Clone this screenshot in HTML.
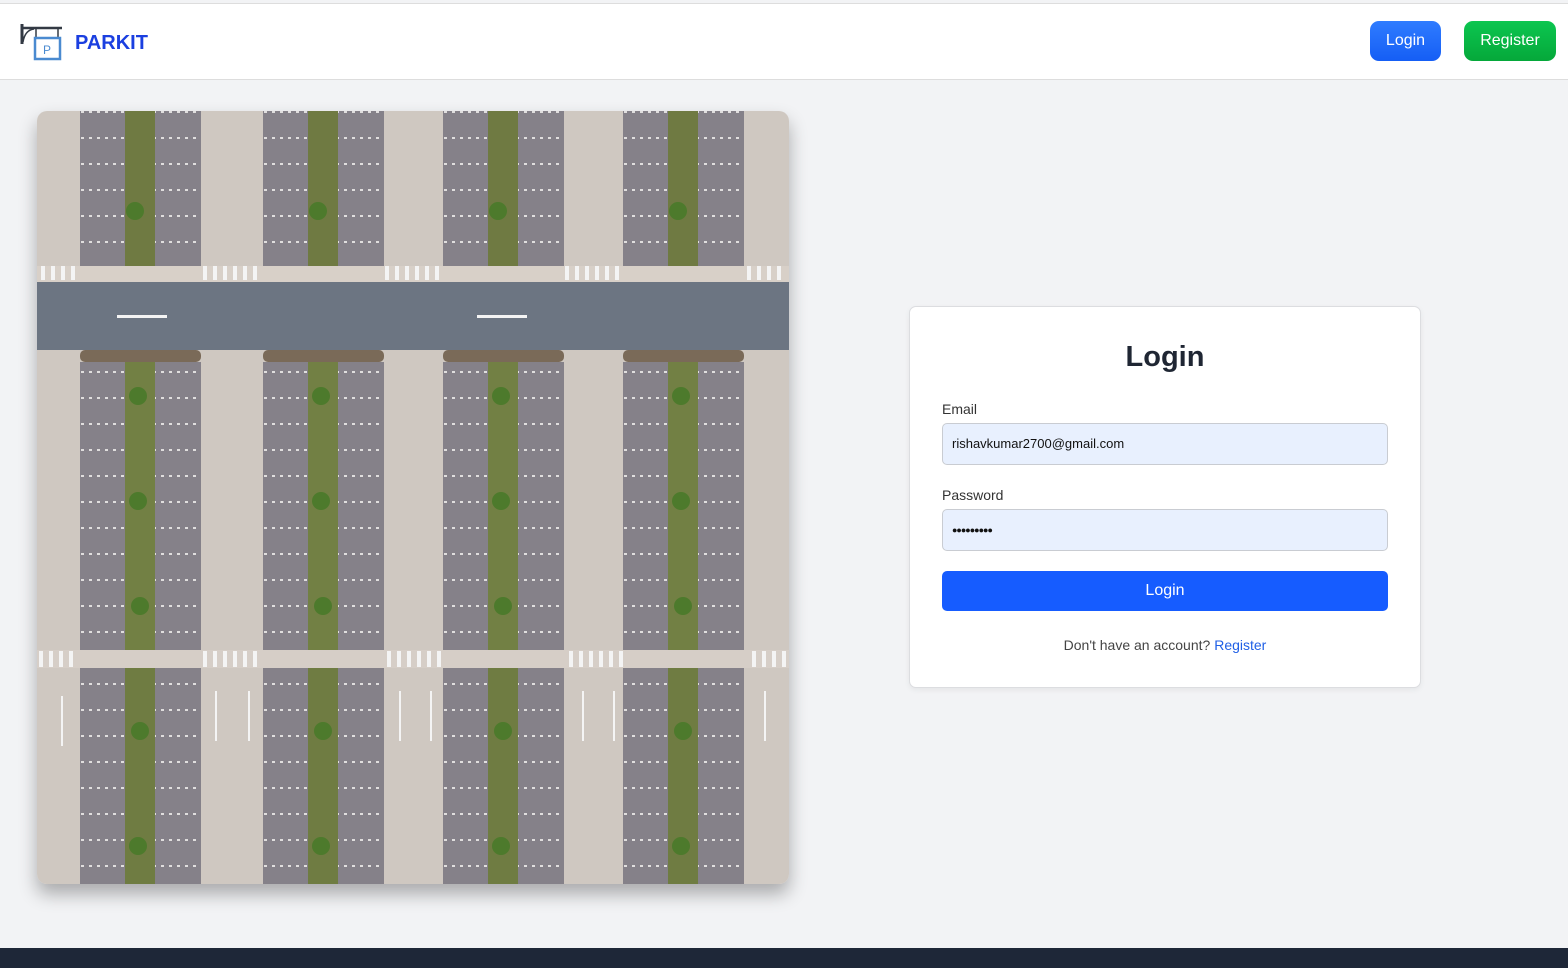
<!DOCTYPE html>
<html><head><style>
*{box-sizing:border-box;margin:0;padding:0}
body{width:1568px;height:968px;background:#f2f3f5;font-family:"Liberation Sans",sans-serif;position:relative;overflow:hidden}
.nav{position:absolute;left:0;top:3px;width:1568px;height:77px;background:#fff;border-top:1px solid #ddd;border-bottom:1px solid #ddd}
.brand{position:absolute;left:75px;top:28px;font-size:20px;font-weight:bold;color:#1b3fe0}
.btn{position:absolute;color:#fff;font-size:16px;border-radius:9px;text-align:center;line-height:40px;height:40px}
.img{position:absolute;left:37px;top:111px;width:752px;height:773px;border-radius:10px;overflow:hidden;box-shadow:0 10px 18px rgba(0,0,0,.3)}
.card{position:absolute;left:909px;top:306px;width:512px;height:382px;background:#fff;border:1px solid #dcdde0;border-radius:7px;box-shadow:0 2px 6px rgba(0,0,0,.06)}
.card h1{position:absolute;top:34px;width:100%;text-align:center;font-size:29px;color:#1f2633}
.lbl{position:absolute;left:32px;font-size:14px;color:#333}
.inp{position:absolute;left:32px;width:446px;height:42px;background:#e8f0fe;border:1px solid #c9ccd2;border-radius:5px;font-size:13px;color:#111;padding-left:9px;line-height:40px}
.sub{position:absolute;left:32px;top:264px;width:446px;height:40px;background:#165cff;border-radius:5px;color:#fff;text-align:center;line-height:40px;font-size:16px}
.foot{position:absolute;left:0;top:948px;width:1568px;height:20px;background:#1e2738}
</style></head><body>
<div class="nav">
<svg style="position:absolute;left:20px;top:18px" width="44" height="40" viewBox="0 0 44 40">
<path d="M2 2V22" stroke="#333a44" stroke-width="3"/><path d="M2 6H42" stroke="#333a44" stroke-width="2.5"/>
<path d="M3 20Q5 8 14 7" stroke="#333a44" stroke-width="1.5" fill="none"/>
<path d="M16 7V16M38 7V16" stroke="#333a44" stroke-width="1.5"/>
<rect x="15" y="16" width="25" height="21" fill="none" stroke="#4a8ad0" stroke-width="2.5"/>
<text x="23" y="32" font-size="12" fill="#4a8ad0" font-family="Liberation Sans">P</text></svg>
<div class="brand">PARKIT</div>
<div class="btn" style="left:1370px;top:17px;width:71px;background:linear-gradient(#2f7cff,#155ef5)">Login</div>
<div class="btn" style="left:1464px;top:17px;width:92px;background:linear-gradient(#0cc650,#05a83a)">Register</div>
</div>
<div class="img">
<svg width="752" height="773" viewBox="0 0 752 773">
<defs><pattern id="lot" width="8" height="26" patternUnits="userSpaceOnUse"><rect width="8" height="26" fill="#858189"/><rect x="1" y="0" width="3" height="2" fill="#e0dede"/></pattern>
<g id="s">
<rect x="0" y="0" width="45" height="155" fill="url(#lot)"/><rect x="45" y="0" width="30" height="155" fill="#6f7a42"/><rect x="75" y="0" width="46" height="155" fill="url(#lot)"/>
<rect x="0" y="239" width="121" height="12" rx="5" fill="#7a6a58"/>
<rect x="0" y="251" width="45" height="288" fill="url(#lot)"/><rect x="45" y="251" width="30" height="288" fill="#728044"/><rect x="75" y="251" width="46" height="288" fill="url(#lot)"/>
<rect x="0" y="557" width="45" height="216" fill="url(#lot)"/><rect x="45" y="557" width="30" height="216" fill="#6f7c42"/><rect x="75" y="557" width="46" height="216" fill="url(#lot)"/>
<circle cx="55" cy="100" r="9" fill="#4d7a2c"/><circle cx="58" cy="285" r="9" fill="#4d7a2c"/><circle cx="58" cy="390" r="9" fill="#4d7a2c"/><circle cx="60" cy="495" r="9" fill="#4d7a2c"/><circle cx="60" cy="620" r="9" fill="#4d7a2c"/><circle cx="58" cy="735" r="9" fill="#4d7a2c"/>
</g></defs>
<rect width="752" height="773" fill="#cfc8c1"/>
<rect y="155" width="752" height="16" fill="#d8d0c8"/>
<rect y="539" width="752" height="18" fill="#d6cec7"/>
<rect y="171" width="752" height="68" fill="#6c7582"/>
<use href="#s" x="43"/><use href="#s" x="226"/><use href="#s" x="406"/><use href="#s" x="586"/>
<g fill="#f4f4f4">
<rect x="4" y="155" width="4" height="14"/><rect x="14" y="155" width="4" height="14"/><rect x="24" y="155" width="4" height="14"/><rect x="34" y="155" width="4" height="14"/>
<rect x="166" y="155" width="4" height="14"/><rect x="176" y="155" width="4" height="14"/><rect x="186" y="155" width="4" height="14"/><rect x="196" y="155" width="4" height="14"/><rect x="206" y="155" width="4" height="14"/><rect x="216" y="155" width="4" height="14"/>
<rect x="348" y="155" width="4" height="14"/><rect x="358" y="155" width="4" height="14"/><rect x="368" y="155" width="4" height="14"/><rect x="378" y="155" width="4" height="14"/><rect x="388" y="155" width="4" height="14"/><rect x="398" y="155" width="4" height="14"/>
<rect x="528" y="155" width="4" height="14"/><rect x="538" y="155" width="4" height="14"/><rect x="548" y="155" width="4" height="14"/><rect x="558" y="155" width="4" height="14"/><rect x="568" y="155" width="4" height="14"/><rect x="578" y="155" width="4" height="14"/>
<rect x="710" y="155" width="4" height="14"/><rect x="720" y="155" width="4" height="14"/><rect x="730" y="155" width="4" height="14"/><rect x="740" y="155" width="4" height="14"/>
<rect x="2" y="540" width="4" height="16"/><rect x="12" y="540" width="4" height="16"/><rect x="22" y="540" width="4" height="16"/><rect x="32" y="540" width="4" height="16"/>
<rect x="166" y="540" width="4" height="16"/><rect x="176" y="540" width="4" height="16"/><rect x="186" y="540" width="4" height="16"/><rect x="196" y="540" width="4" height="16"/><rect x="206" y="540" width="4" height="16"/><rect x="216" y="540" width="4" height="16"/>
<rect x="350" y="540" width="4" height="16"/><rect x="360" y="540" width="4" height="16"/><rect x="370" y="540" width="4" height="16"/><rect x="380" y="540" width="4" height="16"/><rect x="390" y="540" width="4" height="16"/><rect x="400" y="540" width="4" height="16"/>
<rect x="532" y="540" width="4" height="16"/><rect x="542" y="540" width="4" height="16"/><rect x="552" y="540" width="4" height="16"/><rect x="562" y="540" width="4" height="16"/><rect x="572" y="540" width="4" height="16"/><rect x="582" y="540" width="4" height="16"/>
<rect x="715" y="540" width="4" height="16"/><rect x="725" y="540" width="4" height="16"/><rect x="735" y="540" width="4" height="16"/><rect x="745" y="540" width="4" height="16"/>
<rect x="80" y="204" width="50" height="3"/><rect x="440" y="204" width="50" height="3"/>
<rect x="24" y="585" width="2" height="50"/><rect x="178" y="580" width="2" height="50"/><rect x="211" y="580" width="2" height="50"/><rect x="362" y="580" width="2" height="50"/><rect x="393" y="580" width="2" height="50"/><rect x="545" y="580" width="2" height="50"/><rect x="576" y="580" width="2" height="50"/><rect x="727" y="580" width="2" height="50"/>
</g>
</svg></div>
<div class="card">
<h1>Login</h1>
<div class="lbl" style="top:94px">Email</div>
<div class="inp" style="top:116px">rishavkumar2700@gmail.com</div>
<div class="lbl" style="top:180px">Password</div>
<div class="inp" style="top:202px;font-size:9px;letter-spacing:-1px">●●●●●●●●●</div>
<div class="sub">Login</div>
<div style="position:absolute;top:330px;width:100%;text-align:center;font-size:14px;color:#444">Don't have an account? <span style="color:#1f5fe6">Register</span></div>
</div>
<div class="foot"></div>
</body></html>
